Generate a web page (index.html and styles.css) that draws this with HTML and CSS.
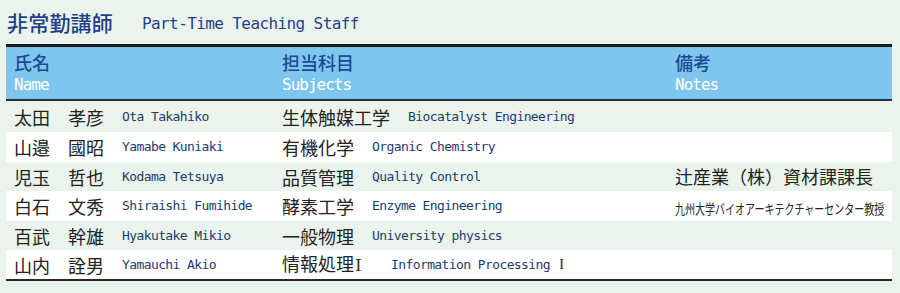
FILE: index.html
```html
<!DOCTYPE html>
<html lang="ja">
<head>
<meta charset="utf-8">
<title>非常勤講師</title>
<link rel="stylesheet" href="styles.css">
</head>
<body>
<h1 class="title"><span class="title-ja">非常勤講師</span><span class="title-en">Part-Time Teaching Staff</span></h1>
<table class="staff">
  <colgroup><col class="c1"><col class="c2"><col class="c3"></colgroup>
  <thead>
    <tr>
      <th><span class="h-ja">氏名</span><span class="h-en">Name</span></th>
      <th><span class="h-ja">担当科目</span><span class="h-en">Subjects</span></th>
      <th><span class="h-ja">備考</span><span class="h-en">Notes</span></th>
    </tr>
  </thead>
  <tbody>
    <tr class="r1">
      <td><div class="name"><span class="ja">太田</span><span class="ja">孝彦</span><span class="en">Ota Takahiko</span></div></td>
      <td><div class="subj"><span class="ja">生体触媒工学</span><span class="en">Biocatalyst Engineering</span></div></td>
      <td></td>
    </tr>
    <tr class="alt r2">
      <td><div class="name"><span class="ja">山邉</span><span class="ja">國昭</span><span class="en">Yamabe Kuniaki</span></div></td>
      <td><div class="subj"><span class="ja">有機化学</span><span class="en">Organic Chemistry</span></div></td>
      <td></td>
    </tr>
    <tr class="r3">
      <td><div class="name"><span class="ja">児玉</span><span class="ja">哲也</span><span class="en">Kodama Tetsuya</span></div></td>
      <td><div class="subj"><span class="ja">品質管理</span><span class="en">Quality Control</span></div></td>
      <td><span class="ja">辻産業（株）資材課課長</span></td>
    </tr>
    <tr class="alt r4">
      <td><div class="name"><span class="ja">白石</span><span class="ja">文秀</span><span class="en">Shiraishi Fumihide</span></div></td>
      <td><div class="subj"><span class="ja">酵素工学</span><span class="en">Enzyme Engineering</span></div></td>
      <td><span class="note-small">九州大学バイオアーキテクチャーセンター教授</span></td>
    </tr>
    <tr class="r5">
      <td><div class="name"><span class="ja">百武</span><span class="ja">幹雄</span><span class="en">Hyakutake Mikio</span></div></td>
      <td><div class="subj"><span class="ja">一般物理</span><span class="en">University physics</span></div></td>
      <td></td>
    </tr>
    <tr class="alt r6">
      <td><div class="name"><span class="ja">山内</span><span class="ja">詮男</span><span class="en">Yamauchi Akio</span></div></td>
      <td><div class="subj"><span class="ja">情報処理<span class="roman-ja">Ⅰ</span></span><span class="en">Information Processing <span class="roman-en">I</span></span></div></td>
      <td></td>
    </tr>
  </tbody>
</table>
</body>
</html>
```
FILE: styles.css
```css
html, body {
  margin: 0;
  padding: 0;
  background: #eaf4ec;
}
body {
  padding: 0 0 0 6px;
  font-family: "Noto Sans CJK JP", "DejaVu Sans", sans-serif;
  color: #222;
}
.title {
  margin: 0;
  height: 44px;
  padding-left: 1px;
  display: flex;
  align-items: center;
  font-weight: normal;
}
.title-ja {
  font-size: 21px;
  font-weight: 500;
  color: #1f3f8c;
  letter-spacing: 0.2px;
}
.title-en {
  margin-left: 29px;
  font-family: "DejaVu Sans Mono", monospace;
  font-size: 16px;
  letter-spacing: -0.6px;
  color: #1f3f8c;
  position: relative;
  top: 1px;
}
.staff {
  width: 886px;
  border-collapse: separate;
  border-spacing: 0;
  table-layout: fixed;
  border-top: 3px solid #1c1c1c;
  border-bottom: 2px solid #2e2626;
}
.c1 { width: 268px; }
.c2 { width: 393px; }
.c3 { width: 225px; }
thead tr {
  background: #7fc6ee;
  height: 54px;
}
th {
  text-align: left;
  font-weight: normal;
  padding: 4px 0 0 8px;
  vertical-align: top;
  border-bottom: 2px solid #27323d;
}
.h-ja {
  display: block;
  font-size: 18px;
  font-weight: 500;
  color: #1a4a98;
  line-height: 22px;
}
.h-en {
  display: block;
  font-family: "DejaVu Sans Mono", monospace;
  font-size: 16px;
  letter-spacing: -1px;
  color: #ffffff;
  line-height: 24px;
}
td {
  padding: 0 0 0 8px;
  vertical-align: middle;
  white-space: nowrap;
}
tbody tr.r1 { height: 31px; }
tbody tr.r2 { height: 30px; }
tbody tr.r3 { height: 29px; }
tbody tr.r4 { height: 30px; }
tbody tr.r5 { height: 29px; }
tbody tr.r6 { height: 29px; }
tbody tr.alt { background: #ffffff; }
.name, .subj {
  display: flex;
  align-items: center;
  gap: 18px;
}
.ja {
  font-size: 18px;
  color: #222;
  line-height: 24px;
}
.en {
  font-family: "DejaVu Sans Mono", monospace;
  font-size: 13px;
  letter-spacing: -0.6px;
  color: #1d3a6e;
  line-height: 16px;
}
.roman-ja {
  display: inline-block;
  width: 18px;
  padding-left: 1px;
  font-family: "Liberation Serif", "DejaVu Serif", serif;
  font-size: 17px;
  color: #333;
}
.roman-en {
  display: inline-block;
  padding-left: 2px;
  font-family: "Liberation Serif", "DejaVu Serif", serif;
  font-size: 14px;
  color: #222;
}
.note-small {
  display: inline-block;
  font-size: 10px;
  line-height: 14px;
  transform: scaleY(1.35);
  color: #222;
}
```
